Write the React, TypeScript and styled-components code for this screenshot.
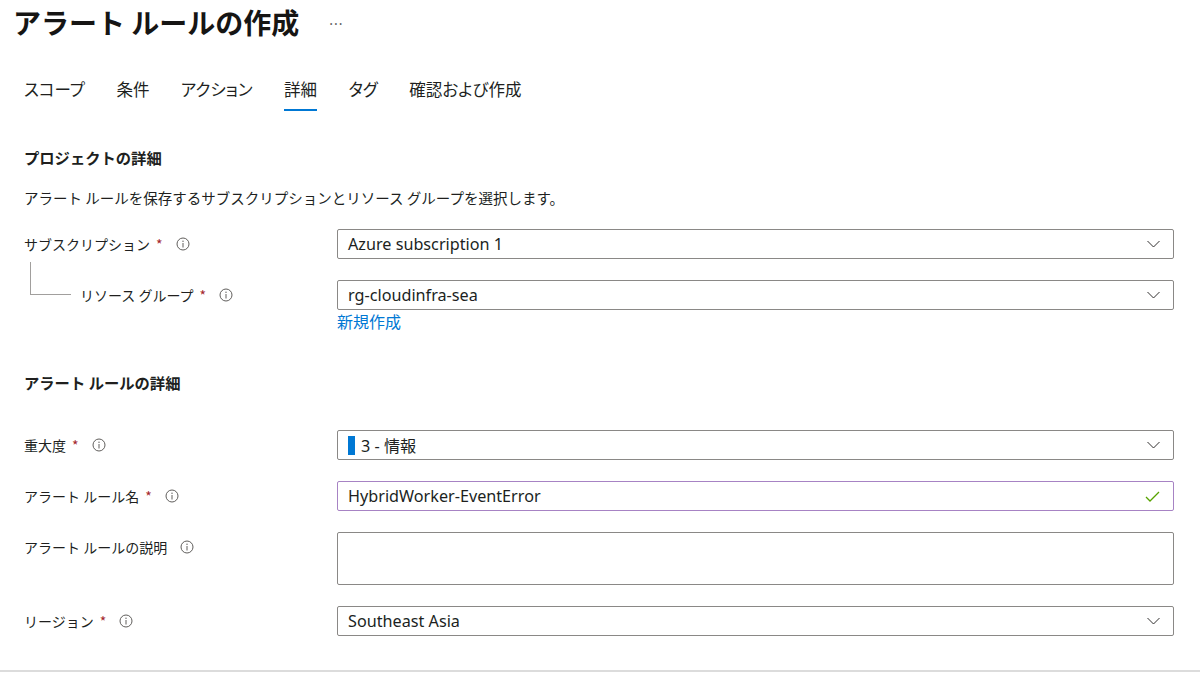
import React from "react";
import styled, { createGlobalStyle } from "styled-components";

const GlobalStyle = createGlobalStyle`
  html, body {
    margin: 0;
    padding: 0;
    background: #ffffff;
  }
  body {
    font-family: "Noto Sans", "Noto Sans CJK JP", sans-serif;
    color: #323130;
  }
  * { box-sizing: border-box; }
`;

const Page = styled.div`
  width: 1200px;
  height: 673px;
  display: flex;
  flex-direction: column;
  overflow: hidden;
`;

const Header = styled.header`
  display: flex;
  align-items: center;
  gap: 30px;
  height: 36px;
  margin-top: 4px;
  padding-left: 13px;
`;

const Title = styled.h1`
  margin: 0;
  font-family: "Noto Sans CJK JP", sans-serif;
  font-size: 28px;
  font-weight: 600;
  line-height: 36px;
  color: #161514;
`;

const More = styled.span`
  font-size: 14px;
  color: #605e5c;
  letter-spacing: 1px;
  margin-top: 2px;
`;

const Tabs = styled.nav`
  display: flex;
  gap: 31.5px;
  margin-top: 37px;
  padding-left: 24px;
`;

const Tab = styled.div<{ $active?: boolean }>`
  font-family: "Noto Sans CJK JP", sans-serif;
  font-size: 16.5px;
  font-feature-settings: "palt";
  line-height: 24px;
  padding-bottom: 8px;
  color: #201f1e;
  border-bottom: 2px solid ${(p) => (p.$active ? "#0078d4" : "transparent")};
`;

const Content = styled.main`
  flex: 1;
  padding-left: 24px;
  padding-right: 26px;
`;

const SectionHeading = styled.h2<{ $top: number }>`
  margin: ${(p) => p.$top}px 0 0;
  font-family: "Noto Sans CJK JP", sans-serif;
  font-size: 15.3px;
  font-weight: 600;
  line-height: 22px;
  color: #201f1e;
`;

const Description = styled.p`
  margin: 20px 0 0;
  font-family: "Noto Sans CJK JP", sans-serif;
  font-size: 14.5px;
  line-height: 20px;
  color: #201f1e;
`;

const FormGrid = styled.div<{ $top: number }>`
  display: grid;
  grid-template-columns: 313px 837px;
  row-gap: 21px;
  align-items: start;
  margin-top: ${(p) => p.$top}px;
`;

const Label = styled.div<{ $nested?: boolean }>`
  position: relative;
  display: flex;
  align-items: center;
  height: 30px;
  padding-left: ${(p) => (p.$nested ? "56px" : "0")};
  font-family: "Noto Sans CJK JP", sans-serif;
  font-size: 14px;
  color: #201f1e;

  ${(p) =>
    p.$nested &&
    `
    &::before {
      content: "";
      position: absolute;
      left: 6px;
      top: -18px;
      width: 40px;
      height: 32px;
      border-left: 1px solid #a19f9d;
      border-bottom: 1px solid #a19f9d;
    }
  `}
`;

const Required = styled.span`
  color: #a4262c;
  margin-left: 6px;
  font-size: 14px;
`;

const InfoIcon = styled.svg<{ $gap: number }>`
  margin-left: ${(p) => p.$gap}px;
  width: 14px;
  height: 14px;
  flex: none;
`;

const Field = styled.div`
  display: flex;
  flex-direction: column;
`;

const Box = styled.div<{ $accent?: boolean; $tall?: boolean }>`
  display: flex;
  align-items: center;
  height: ${(p) => (p.$tall ? "53px" : "30px")};
  padding: 0 13px 0 10px;
  border: 1px solid ${(p) => (p.$accent ? "#a783c4" : "#8a8886")};
  border-radius: 2px;
  background: #ffffff;
  font-family: "Noto Sans", "Noto Sans CJK JP", sans-serif;
  font-size: 16.2px;
  color: #201f1e;
`;

const Value = styled.span`
  flex: 1;
  white-space: nowrap;
`;

const SeverityBar = styled.span`
  display: inline-block;
  width: 7px;
  height: 19px;
  background: #0078d4;
  margin-right: 6px;
`;

const CreateLink = styled.a`
  font-family: "Noto Sans CJK JP", sans-serif;
  font-size: 16px;
  line-height: 22px;
  color: #0078d4;
  text-decoration: none;
`;

const Footer = styled.footer`
  height: 2px;
  margin-bottom: 1px;
  background: #dcdcdc;
`;

const Info = ({ gap }: { gap: number }) => (
  <InfoIcon $gap={gap} viewBox="0 0 14 14">
    <circle cx="7" cy="7" r="6" fill="none" stroke="#605e5c" strokeWidth="1" />
    <line x1="7" y1="6" x2="7" y2="10.5" stroke="#605e5c" strokeWidth="1" />
    <circle cx="7" cy="4.2" r="0.7" fill="#605e5c" />
  </InfoIcon>
);

const Chevron = () => (
  <svg width="13" height="8" viewBox="0 0 13 8">
    <polyline points="0.5,1 6.5,7 12.5,1" fill="none" stroke="#323130" strokeWidth="1" />
  </svg>
);

const Check = () => (
  <svg width="15" height="11" viewBox="0 0 15 11">
    <polyline points="1,6 5,10 14,1" fill="none" stroke="#57a300" strokeWidth="1.3" />
  </svg>
);

type LabelProps = {
  text: string;
  required?: boolean;
  nested?: boolean;
};

const FieldLabel = ({ text, required, nested }: LabelProps) => (
  <Label $nested={nested}>
    {text}
    {required && <Required>*</Required>}
    <Info gap={13} />
  </Label>
);

export default function App() {
  return (
    <Page>
      <GlobalStyle />
      <Header>
        <Title>アラート ルールの作成</Title>
        <More>···</More>
      </Header>

      <Tabs>
        <Tab>スコープ</Tab>
        <Tab>条件</Tab>
        <Tab>アクション</Tab>
        <Tab $active>詳細</Tab>
        <Tab>タグ</Tab>
        <Tab>確認および作成</Tab>
      </Tabs>

      <Content>
        <SectionHeading $top={35}>プロジェクトの詳細</SectionHeading>
        <Description>
          アラート ルールを保存するサブスクリプションとリソース グループを選択します。
        </Description>

        <FormGrid $top={21}>
          <FieldLabel text="サブスクリプション" required />
          <Box>
            <Value>Azure subscription 1</Value>
            <Chevron />
          </Box>

          <FieldLabel text="リソース グループ" required nested />
          <Field>
            <Box>
              <Value>rg-cloudinfra-sea</Value>
              <Chevron />
            </Box>
            <CreateLink href="#">新規作成</CreateLink>
          </Field>
        </FormGrid>

        <SectionHeading $top={39}>アラート ルールの詳細</SectionHeading>

        <FormGrid $top={37}>
          <FieldLabel text="重大度" required />
          <Box>
            <SeverityBar />
            <Value>3 - 情報</Value>
            <Chevron />
          </Box>

          <FieldLabel text="アラート ルール名" required />
          <Box $accent>
            <Value>HybridWorker-EventError</Value>
            <Check />
          </Box>

          <FieldLabel text="アラート ルールの説明" />
          <Box $tall />

          <FieldLabel text="リージョン" required />
          <Box>
            <Value>Southeast Asia</Value>
            <Chevron />
          </Box>
        </FormGrid>
      </Content>

      <Footer />
    </Page>
  );
}
